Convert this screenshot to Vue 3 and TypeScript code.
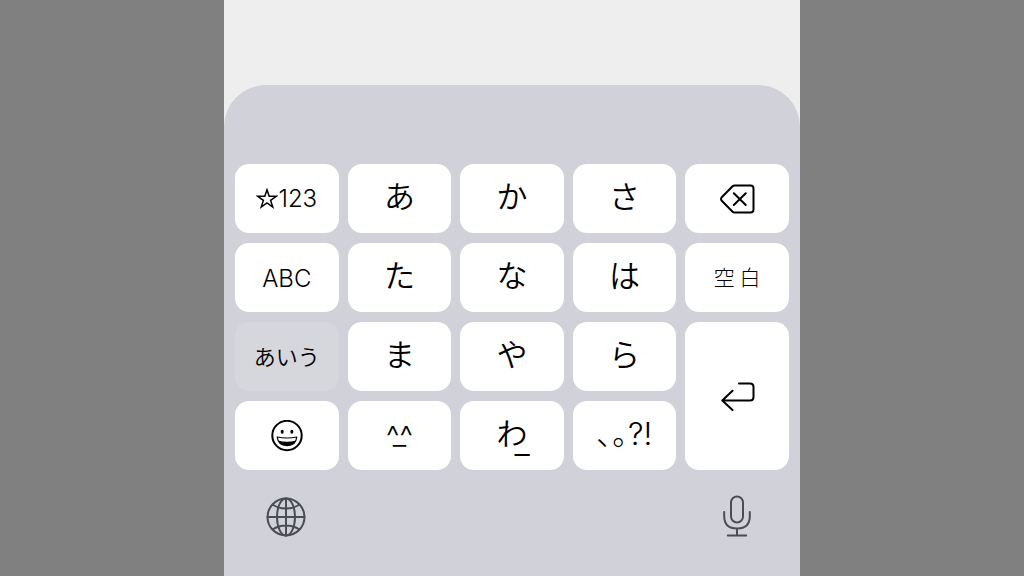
<script setup lang="ts">
type Kind = 'latin' | 'kana' | 'small' | 'space' | 'symbols' | 'star' | 'face' | 'wa' | 'emoji' | 'delete' | 'return'

interface Key {
  label: string
  kind: Kind
  name?: string
}

const keys: Key[] = [
  { label: '123', kind: 'star', name: '☆123' },
  { label: 'あ', kind: 'kana' },
  { label: 'か', kind: 'kana' },
  { label: 'さ', kind: 'kana' },
  { label: '', kind: 'delete', name: '削除' },
  { label: 'ABC', kind: 'latin' },
  { label: 'た', kind: 'kana' },
  { label: 'な', kind: 'kana' },
  { label: 'は', kind: 'kana' },
  { label: '空 白', kind: 'space' },
  { label: 'あいう', kind: 'small' },
  { label: 'ま', kind: 'kana' },
  { label: 'や', kind: 'kana' },
  { label: 'ら', kind: 'kana' },
  { label: '', kind: 'return', name: '改行' },
  { label: '', kind: 'emoji', name: '絵文字' },
  { label: '^^', kind: 'face' },
  { label: 'わ', kind: 'wa' },
  { label: '､｡?!', kind: 'symbols' },
]
</script>

<template>
  <main class="stage">
    <div class="screen">
      <section class="keyboard" aria-label="キーボード">
        <div class="keys">
          <button
            v-for="key in keys"
            :key="key.kind + key.label"
            type="button"
            class="key"
            :class="key.kind"
            :aria-label="key.name"
          >
            <svg v-if="key.kind === 'delete'" width="36" height="30" viewBox="0 0 36 30" aria-hidden="true">
              <path d="M15.5 1.5H31.5Q34.5 1.5 34.5 4.5V25.5Q34.5 28.5 31.5 28.5H15.5Q14.4 28.5 13.6 27.7L3 17Q1 15 3 13L13.6 2.3Q14.4 1.5 15.5 1.5Z" />
              <path d="M14.8 9.2L26.8 21M26.8 9.2L14.8 21" />
            </svg>
            <svg v-else-if="key.kind === 'return'" width="36" height="30" viewBox="0 0 36 30" aria-hidden="true">
              <path d="M20 2.5H31Q34.5 2.5 34.5 6V16Q34.5 19.5 31 19.5H3.5M13.5 9.7L3.3 19.5L13.5 29" />
            </svg>
            <svg v-else-if="key.kind === 'emoji'" width="32" height="32" viewBox="0 0 32 32" aria-hidden="true">
              <circle cx="16" cy="15.5" r="14.7" />
              <ellipse class="solid" cx="11.2" cy="11.8" rx="1.5" ry="2" />
              <ellipse class="solid" cx="20.8" cy="11.8" rx="1.5" ry="2" />
              <path class="mouth" d="M6.2 17Q16 19 25.8 17Q24.8 25.6 16 25.6Q7.2 25.6 6.2 17Z" />
              <path class="solid" d="M7 20.4Q16 23 25 20.4Q22.7 25.6 16 25.6Q9.3 25.6 7 20.4Z" />
            </svg>
            <template v-else>
              <svg v-if="key.kind === 'star'" class="star-icon" width="22" height="22" viewBox="0 0 22 22" aria-hidden="true">
                <path d="M11 1.8L13.2 8.3H20.2L14.6 12.4L16.8 19.1L11 15L5.2 19.1L7.4 12.4L1.8 8.3H8.8Z" />
              </svg>
              <span class="label">{{ key.label }}<span v-if="key.kind === 'face' || key.kind === 'wa'" class="under">_</span></span>
            </template>
          </button>
        </div>
        <div class="tools">
          <button type="button" class="tool" aria-label="次のキーボード">
            <svg width="40" height="40" viewBox="0 0 40 40" aria-hidden="true">
              <circle cx="20" cy="20" r="18.5" />
              <ellipse cx="20" cy="20" rx="9" ry="18.5" />
              <path d="M20 1.5V38.5M1.5 20H38.5M6.5 7.5Q12.5 11.5 20 11.5T33.5 7.5M6.5 32.5Q12.5 28.5 20 28.5T33.5 32.5" />
            </svg>
          </button>
          <button type="button" class="tool" aria-label="音声入力">
            <svg width="30" height="44" viewBox="0 0 30 44" aria-hidden="true">
              <rect x="9" y="1.5" width="12" height="26" rx="6" />
              <path d="M2.2 17V21Q2.2 33.5 15 33.5Q27.8 33.5 27.8 21V17M15 33.5V40.5M5.8 40.5H24.2" />
            </svg>
          </button>
        </div>
      </section>
    </div>
  </main>
</template>

<style>
body {
  margin: 0;
  background: #808080;
}
</style>

<style scoped>
.stage {
  display: flex;
  justify-content: center;
  min-height: 100vh;
  background: #808080;
}

.screen {
  display: flex;
  flex-direction: column;
  box-sizing: border-box;
  width: 56.25%;
  padding-top: 85px;
  background: #eee;
}

.keyboard {
  flex: 1;
  padding: 79px 11px 0;
  border-radius: 42px 42px 0 0;
  background: #d0d1d9;
}

.keys {
  display: grid;
  grid-template-columns: repeat(5, 1fr);
  grid-auto-rows: 69px;
  gap: 10px 9px;
}

button {
  display: flex;
  align-items: center;
  justify-content: center;
  margin: 0;
  padding: 0;
  border: 0;
  background: none;
  color: #000;
  font-family: Inter, "Noto Sans CJK JP", sans-serif;
  font-weight: 300;
}

.key {
  border-radius: 14px;
  background: #fff;
  font-size: 24px;
  line-height: 32px;
}

.label {
  position: relative;
}

.kana,
.wa {
  padding-bottom: 8px;
  font-family: "Noto Sans CJK JP", sans-serif;
  font-size: 31px;
  font-weight: 350;
}

.latin {
  padding-top: 2px;
}

.small {
  background: #d6d7dc;
  font-size: 22px;
  font-weight: 350;
}

.space {
  padding-bottom: 4px;
  font-family: "Noto Sans CJK JP", sans-serif;
  font-size: 21px;
}

.symbols {
  padding-bottom: 4px;
  font-size: 31px;
}

.return {
  grid-row: span 2;
}

.face {
  font-size: 30px;
}

.under {
  position: absolute;
  font-family: Inter, sans-serif;
  font-size: 30px;
  font-weight: 300;
}

.face .under {
  left: 50%;
  top: -2px;
  transform: translateX(-50%);
}

.wa .under {
  left: 18px;
  top: 10px;
  font-size: 34px;
}

svg {
  display: block;
  fill: none;
  stroke: #000;
  stroke-width: 2;
  stroke-linecap: round;
  stroke-linejoin: round;
}

.star-icon {
  stroke-width: 1.5;
  stroke-linejoin: miter;
}

.solid {
  fill: #000;
  stroke: none;
}

.mouth {
  stroke-width: 1.2;
}

.tools {
  display: flex;
  justify-content: space-between;
  align-items: center;
  margin-top: 25px;
  padding: 0 37px 0 31px;
}

.tool svg {
  stroke: #4b4d54;
  stroke-width: 2;
}
</style>
